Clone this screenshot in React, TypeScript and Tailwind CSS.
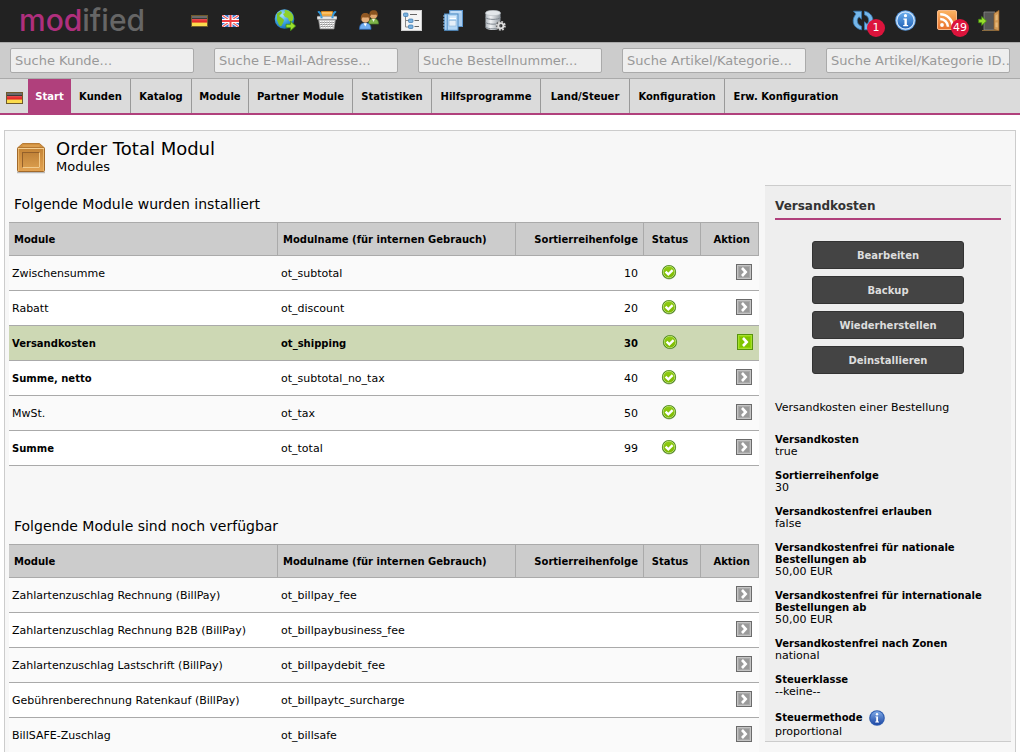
import React from "react";

const NAV = [
  { label: "Start", width: "min-w-[43px]" },
  { label: "Kunden", width: "min-w-[60px]" },
  { label: "Katalog", width: "min-w-[61px]" },
  { label: "Module", width: "min-w-[57px]" },
  { label: "Partner Module", width: "min-w-[104px]" },
  { label: "Statistiken", width: "min-w-[79px]" },
  { label: "Hilfsprogramme", width: "min-w-[109px]" },
  { label: "Land/Steuer", width: "min-w-[89px]" },
  { label: "Konfiguration", width: "min-w-[95px]" },
  { label: "Erw. Konfiguration", width: "min-w-[122px]" },
];

const SEARCHES = [
  "Suche Kunde...",
  "Suche E-Mail-Adresse...",
  "Suche Bestellnummer...",
  "Suche Artikel/Kategorie...",
  "Suche Artikel/Kategorie ID..",
];

type Row = {
  name: string;
  code: string;
  sort?: string;
  bold?: boolean;
  selected?: boolean;
};

const INSTALLED: Row[] = [
  { name: "Zwischensumme", code: "ot_subtotal", sort: "10" },
  { name: "Rabatt", code: "ot_discount", sort: "20" },
  { name: "Versandkosten", code: "ot_shipping", sort: "30", bold: true, selected: true },
  { name: "Summe, netto", code: "ot_subtotal_no_tax", sort: "40", bold: true },
  { name: "MwSt.", code: "ot_tax", sort: "50" },
  { name: "Summe", code: "ot_total", sort: "99", bold: true },
];

const AVAILABLE: Row[] = [
  { name: "Zahlartenzuschlag Rechnung (BillPay)", code: "ot_billpay_fee" },
  { name: "Zahlartenzuschlag Rechnung B2B (BillPay)", code: "ot_billpaybusiness_fee" },
  { name: "Zahlartenzuschlag Lastschrift (BillPay)", code: "ot_billpaydebit_fee" },
  { name: "Gebührenberechnung Ratenkauf (BillPay)", code: "ot_billpaytc_surcharge" },
  { name: "BillSAFE-Zuschlag", code: "ot_billsafe" },
];

const SETTINGS = [
  ["Versandkosten", "true"],
  ["Sortierreihenfolge", "30"],
  ["Versandkostenfrei erlauben", "false"],
  ["Versandkostenfrei für nationale Bestellungen ab", "50,00 EUR"],
  ["Versandkostenfrei für internationale Bestellungen ab", "50,00 EUR"],
  ["Versandkostenfrei nach Zonen", "national"],
  ["Steuerklasse", "--keine--"],
];

function GermanFlag() {
  return (
    <svg viewBox="0 0 17 12" className="h-3 w-[17px]" aria-hidden="true">
      <rect width="17" height="12" fill="#6e5a2c" />
      <rect x="1" y="1" width="15" height="3.4" fill="#3a3a3a" />
      <rect x="1" y="4" width="15" height="4" fill="#e22a2a" />
      <rect x="1" y="7.6" width="15" height="3.4" fill="#fbdc4c" />
      <rect x="1" y="1" width="15" height="2" fill="#fff" opacity=".25" />
      <rect x="1" y="4" width="15" height="1.4" fill="#fff" opacity=".15" />
    </svg>
  );
}

function BritishFlag() {
  return (
    <svg viewBox="0 0 17 12" className="h-3 w-[17px]" aria-hidden="true">
      <rect width="17" height="12" fill="#3f74cc" />
      <path d="M0 0 17 12M17 0 0 12" stroke="#fff" strokeWidth="2.8" />
      <path d="M0 0 17 12M17 0 0 12" stroke="#ee5a5a" strokeWidth="1.2" />
      <path d="M8.5 0V12M0 6H17" stroke="#fff" strokeWidth="4" />
      <path d="M8.5 0V12M0 6H17" stroke="#ee3f46" strokeWidth="2" />
    </svg>
  );
}

function GlobeIcon() {
  return (
    <svg viewBox="0 0 22 22" className="size-[22px]" aria-hidden="true">
      <defs>
        <radialGradient id="globe" cx=".38" cy=".3" r=".75">
          <stop offset="0" stopColor="#a8e0fb" />
          <stop offset=".55" stopColor="#3aa0e0" />
          <stop offset="1" stopColor="#1667b4" />
        </radialGradient>
      </defs>
      <circle cx="10.5" cy="10" r="9.8" fill="url(#globe)" />
      <path d="M11 1c3 0 6 2 7.500 4.500.8 1.500 1 3.500.5 5.500l-2 2-2-1-1-3-3-1-2-3 2-1-.500-2z" fill="#8ed02c" />
      <path d="M3 4.500 7 2l1 2-3 3 3 2 2 2-1 3-2 3.500-2-1.500L3 11z" fill="#7cc427" />
      <path d="M12 15.300h4.500V12.200L21.700 17 16.500 21.700v-3H12z" fill="#9be02a" stroke="#3f8c12" strokeWidth=".8" />
    </svg>
  );
}

function BasketIcon() {
  return (
    <svg viewBox="0 0 20 20" className="size-5" aria-hidden="true">
      <rect x="4" y="1.500" width="12" height="5" rx="1" fill="#f3a93c" stroke="#d68318" />
      <path d="M5 3h10" stroke="#ffd894" />
      <path d="M1 2.500C3 1 3 4 4.500 6M19 2.500C17 1 17 4 15.500 6" stroke="#2f9be2" strokeWidth="2" fill="none" />
      <rect x="0" y="6.200" width="20" height="3.200" rx="1" fill="#e8e8e8" stroke="#8e8e8e" strokeWidth=".6" />
      <path d="M1.500 9.500h17l-1.500 9.500H3z" fill="#c9c9c9" stroke="#909090" strokeWidth=".6" />
      <path d="M3 11.500h14M3 13.500h14M3.500 15.500h13M4 17.500h12" stroke="#fff" strokeWidth="1" strokeDasharray="1.500 1" />
      <path d="M3 12.500h14M3.500 14.500h13M4 16.500h12" stroke="#858585" strokeWidth=".8" strokeDasharray="1.500 1" />
      <path d="M3.500 7.200h2M14.500 7.200h2" stroke="#2f9be2" strokeWidth="2" />
    </svg>
  );
}

function UsersIcon() {
  return (
    <svg viewBox="0 0 20 20" className="size-5" aria-hidden="true">
      <path d="M9.500 14c0-4 2-5.500 5-5.500s5 1.500 5 5.500z" fill="#7eb34a" stroke="#4c7d22" strokeWidth=".7" />
      <path d="m13 9 1.500 3L16 9z" fill="#eaf5dc" />
      <circle cx="14.500" cy="5" r="3.700" fill="#e0a870" />
      <path d="M10.500 7C9.800 1.500 12 .3 14.700.3S19.500 2 18.600 7l-1.400-2.500c-1.700.5-3.300.4-4.700 0z" fill="#8a5420" />
      <path d="M.5 19.300c0-4.800 2-6.300 5.700-6.300S12 14.500 12 19.300z" fill="#72aef0" stroke="#2d67b2" strokeWidth=".8" />
      <path d="m4.500 13.200 1.800 3.400L8 13.200z" fill="#fff" />
      <circle cx="6.300" cy="8.600" r="4.100" fill="#e6b07c" />
      <path d="M1.900 10.500C1.200 4.500 3.500 3 6.400 3s5.200 1.800 4.400 7.500l-1.500-3.300c-2 .6-4 .4-5.700 0z" fill="#915823" />
    </svg>
  );
}

function TreeIcon() {
  return (
    <svg viewBox="0 0 21 21" className="size-[21px]" aria-hidden="true">
      <rect x=".5" y=".5" width="20" height="20" fill="#f4f4f4" stroke="#cfcfcf" />
      <path d="M4.500 5v12h5M4.500 10.500h5" stroke="#888" fill="none" />
      <rect x="2.500" y="3" width="4.500" height="3.500" rx="1" fill="#78b0de" stroke="#3a78b0" strokeWidth=".7" />
      <rect x="7.500" y="9" width="4.500" height="3.500" rx="1" fill="#78b0de" stroke="#3a78b0" strokeWidth=".7" />
      <rect x="7.500" y="15" width="4.500" height="3.500" rx="1" fill="#78b0de" stroke="#3a78b0" strokeWidth=".7" />
      <path d="M9 4.500h7M13.500 10.500H18M13.500 16.500H18" stroke="#666" />
    </svg>
  );
}

function BooksIcon() {
  return (
    <svg viewBox="0 0 20 21" className="h-[21px] w-5" aria-hidden="true">
      <rect x="6.500" y=".5" width="13" height="16" fill="#a9cdef" stroke="#5b93c9" />
      <path d="M8 2h10" stroke="#d9ebfb" />
      <rect x="1.500" y="4" width="13.500" height="16.300" fill="#b3d6f4" stroke="#4f8cc4" />
      <path d="M4.200 4.500v15.500" stroke="#4f8cc4" />
      <path d="M6.500 7h6.500M6.500 8.500h6.500" stroke="#fff" />
      <rect x="6" y="10.500" width="7" height="5.500" fill="#e5eff8" stroke="#8ab2d6" strokeWidth=".6" />
      <path d="M0 6h3M0 9h3M0 12h3M0 15h3M0 18h3" stroke="#9fc4e4" strokeWidth="1.200" />
    </svg>
  );
}

function DatabaseIcon() {
  return (
    <svg viewBox="0 0 21 21" className="size-[21px]" aria-hidden="true">
      <defs>
        <linearGradient id="drum">
          <stop offset="0" stopColor="#aab1b8" />
          <stop offset=".35" stopColor="#f1f3f5" />
          <stop offset="1" stopColor="#8e969d" />
        </linearGradient>
      </defs>
      <path d="M.5 3v14c0 2 3 3 7.500 3s7.500-1 7.500-3V3z" fill="url(#drum)" />
      <ellipse cx="8" cy="3" rx="7.500" ry="2.700" fill="#e3e7ea" stroke="#b1b8be" strokeWidth=".6" />
      <path d="M.5 7.500c2 2.500 13 2.500 15 0M.5 12.300c2 2.500 13 2.500 15 0M.5 17c2 2.500 13 2.500 15 0" stroke="#7d858d" fill="none" />
      <circle cx="15.800" cy="15.800" r="5" fill="#3a3a3a" opacity=".6" />
      <circle cx="15.800" cy="15.800" r="2.600" fill="none" stroke="#dedede" strokeWidth="1.800" />
      <circle cx="15.800" cy="15.800" r="4.100" fill="none" stroke="#d6d6d6" strokeWidth="1.700" strokeDasharray="1.700 1.520" />
    </svg>
  );
}

function RefreshIcon() {
  return (
    <svg viewBox="0 0 22 21" className="h-[21px] w-[22px]" aria-hidden="true">
      <g fill="#76b7ea" stroke="#3677b0" strokeWidth=".8">
        <path d="M1.500 1.200h8v8L7 6.800C5.500 8.500 5 10 5.500 12c.4 2 1.800 3.500 4 4.200v3.600C5 19 2 16 1.300 12.500.8 9.500 1.800 6.500 4 4z" />
        <path d="M20.500 19.800h-8v-8L15 14.200c1.500-1.700 2-3.200 1.500-5.200-.4-2-1.800-3.500-4-4.200V1.200C17 2 20 5 20.700 8.500c.5 3-.5 6-2.700 8.500z" />
      </g>
    </svg>
  );
}

function InfoIcon({ className, id }: { className: string; id: string }) {
  return (
    <svg viewBox="0 0 20 20" className={className} aria-hidden="true">
      <defs>
        <linearGradient id={id} x1="0" y1="0" x2="0" y2="1">
          <stop offset="0" stopColor={id === "infoTop" ? "#6db0f0" : "#7ea9e6"} />
          <stop offset="1" stopColor={id === "infoTop" ? "#1d5fb4" : "#1d47a4"} />
        </linearGradient>
      </defs>
      <circle cx="10" cy="10" r="9.800" fill={id === "infoTop" ? "#5b9be0" : "#2f5db0"} />
      <circle cx="10" cy="10" r="8.300" fill={`url(#${id})`} stroke={id === "infoTop" ? "#d5e8fb" : "none"} strokeWidth="1.200" />
      <circle cx="10" cy="5.400" r="1.500" fill="#fff" />
      <path d="M8 8h3.300v6.300h1.200v1.200H7.800v-1.200H9V9.200H8z" fill="#fff" />
    </svg>
  );
}

function FeedIcon() {
  return (
    <svg viewBox="0 0 20 20" className="size-5" aria-hidden="true">
      <defs>
        <linearGradient id="feed" x2="0" y2="1">
          <stop offset="0" stopColor="#fbb463" />
          <stop offset="1" stopColor="#e8702c" />
        </linearGradient>
      </defs>
      <rect x=".5" y=".5" width="19" height="19" rx="1.500" fill="url(#feed)" stroke="#f7b98a" />
      <circle cx="5" cy="15" r="1.900" fill="#fff" />
      <path d="M3.200 9a7.800 7.800 0 0 1 7.800 7.800M3.200 4.300A12.500 12.500 0 0 1 15.700 16.800" fill="none" stroke="#fff" strokeWidth="2.500" />
    </svg>
  );
}

function DoorIcon() {
  return (
    <svg viewBox="0 0 22 21" className="h-[21px] w-[22px]" aria-hidden="true">
      <path d="M6 2h11v18H6z" fill="#565656" stroke="#8b8b8b" strokeWidth=".8" />
      <path d="M4 20.500h17" stroke="#8a6b40" />
      <path d="m16 3.500 5-3.200v20.500l-5-1.300z" fill="#d29a56" stroke="#8e5c26" strokeWidth=".7" />
      <path d="M17.500 5.500 19.700 4v6l-2.200.5zM17.500 12.500h2.200v5l-2.200-.5z" fill="#e5b87a" />
      <path d="M.7 9.300h3V6.500L8.500 11l-4.800 4.500v-2.800h-3z" fill="#98dd2c" stroke="#438f10" strokeWidth=".8" />
    </svg>
  );
}

function CrateIcon() {
  return (
    <svg viewBox="0 0 30 32" className="h-8 w-[30px]" aria-hidden="true">
      <defs>
        <linearGradient id="crate" x2="0" y2="1">
          <stop offset="0" stopColor="#c48436" />
          <stop offset="1" stopColor="#e3a352" />
        </linearGradient>
        <linearGradient id="crateInner" x2="0" y2="1">
          <stop offset="0" stopColor="#c08238" />
          <stop offset="1" stopColor="#d99c4c" />
        </linearGradient>
      </defs>
      <path d="M1 30.500h28" stroke="#b9b9b9" strokeWidth="1.500" />
      <path d="M6.500 1.500h17l5 4.500H1.500z" fill="#d2913f" stroke="#b87c36" />
      <rect x="1.500" y="6" width="27" height="23.500" rx="1" fill="url(#crate)" stroke="#a2692a" />
      <path d="M2 6.500h26" stroke="#f5cf92" />
      <path d="M2.500 7v22M27.500 7v22" stroke="#e9b569" />
      <rect x="6.500" y="10.500" width="17" height="15" fill="url(#crateInner)" stroke="#94602a" />
      <path d="M6.500 25.500h17v-15" stroke="#f2cb8c" fill="none" />
      <path d="M6.500 4h17" stroke="#e3aa5e" />
    </svg>
  );
}

function StatusIcon() {
  return (
    <svg viewBox="0 0 16 16" className="inline-block size-4" aria-hidden="true">
      <defs>
        <linearGradient id="status" x2="0" y2="1">
          <stop offset="0" stopColor="#8fce14" />
          <stop offset="1" stopColor="#7cb800" />
        </linearGradient>
      </defs>
      <circle cx="8" cy="8.600" r="7.100" fill="#c3c9b9" />
      <circle cx="8" cy="8" r="7.100" fill="#4f8d1c" />
      <circle cx="8" cy="8" r="5.800" fill="url(#status)" stroke="#c5e57c" strokeWidth=".8" />
      <path d="m4.600 7.700 2.700 2.700 4.300-4.200" fill="none" stroke="#fff" strokeWidth="2.400" />
    </svg>
  );
}

function ActionIcon({ active }: { active?: boolean }) {
  return (
    <svg viewBox="0 0 16 16" className="size-4" aria-hidden="true">
      <rect x=".5" y=".5" width="15" height="15" fill={active ? "#8fd400" : "#a9a9a9"} stroke={active ? "#57930c" : "#6b6b6b"} />
      <rect x="1.500" y="1.500" width="13" height="13" fill="none" stroke={active ? "#a4de30" : "#c4c4c4"} />
      <rect x="3" y="3" width="10" height="10" fill={active ? "#7fc400" : "#9a9a9a"} />
      <path d="m6 4 3.700 4L6 12" fill="none" stroke="#fff" strokeWidth="2.600" />
    </svg>
  );
}

function IconLink({ label, children, badge }: { label: string; children: React.ReactNode; badge?: string }) {
  return (
    <a href="#" aria-label={label} className="relative flex w-[42px] items-center justify-center">
      {children}
      {badge && (
        <span className="absolute top-[9px] left-[25px] flex size-[18px] items-center justify-center rounded-full bg-[#dc143c] text-[11px] leading-none text-white">
          {badge}
        </span>
      )}
    </a>
  );
}

function ModuleTable({ rows, label }: { rows: Row[]; label: string }) {
  const head = "border-y border-r border-[#aaa] pt-0.5 pb-0 text-[10px] font-bold";
  return (
    <table aria-label={label} className="w-full table-fixed border-separate border-spacing-0 text-[11px] leading-3 text-black">
      <colgroup>
        <col />
        <col className="w-[238px]" />
        <col className="w-[128px]" />
        <col className="w-[57px]" />
        <col className="w-[58px]" />
      </colgroup>
      <thead>
        <tr className="h-[34px] bg-[#ccc]">
          <th className={`${head} px-[5px] text-left`}>Module</th>
          <th className={`${head} px-[5px] text-left`}>Modulname (für internen Gebrauch)</th>
          <th className={`${head} px-[5px] text-right`}>Sortierreihenfolge</th>
          <th className={`${head} pr-1 text-center`}>Status</th>
          <th className={`${head} pr-2 text-right`}>Aktion</th>
        </tr>
      </thead>
      <tbody>
        {rows.map((r) => {
          const cell = "border-b border-[#aaa]";
          const text = `${cell} pt-0.5`;
          return (
            <tr key={r.code} className={`h-[35px] ${r.selected ? "bg-[#cdd8b4] text-[10px] font-bold" : "odd:bg-[#fafafa] even:bg-white"}`}>
              <td className={`${text} px-[3px] ${r.bold ? "text-[10px] font-bold" : ""}`}>{r.name}</td>
              <td className={`${text} px-[3px]`}>{r.code}</td>
              <td className={`${text} pr-[6px] text-right`}>{r.sort}</td>
              <td className={`${cell} pb-0.5`}>
                {r.sort && (
                  <span className={`flex justify-center ${r.selected ? "pr-[6px]" : "pr-2"}`}>
                    <StatusIcon />
                  </span>
                )}
              </td>
              <td className={`${cell} pb-0.5`}>
                <a href="#" aria-label={`${r.name} auswählen`} className={`flex justify-end ${r.selected ? "pr-[6px]" : "pr-[7px]"}`}>
                  <ActionIcon active={r.selected} />
                </a>
              </td>
            </tr>
          );
        })}
      </tbody>
    </table>
  );
}

export default function App() {
  return (
    <div className="flex h-screen flex-col overflow-hidden bg-white font-['DejaVu_Sans',Verdana,sans-serif] text-[11px] leading-3 text-black">
      <header className="flex h-[42px] shrink-0 items-center bg-[#222] pr-[10px] pb-0.5 pl-[19px]">
        <a href="#" className="w-[159px] font-[Inter,sans-serif] text-[30px] leading-10 font-medium text-[#666]">
          <span className="text-[#af2f7d]">mod</span>ified
        </a>
        <div className="flex gap-[14px] pt-0.5 pr-[25px] pl-[13px]">
          <a href="#" aria-label="Deutsch"><GermanFlag /></a>
          <a href="#" aria-label="English"><BritishFlag /></a>
        </div>
        <nav aria-label="Schnellzugriff" className="flex">
          <IconLink label="Shop"><GlobeIcon /></IconLink>
          <IconLink label="Bestellungen"><BasketIcon /></IconLink>
          <IconLink label="Kunden"><UsersIcon /></IconLink>
          <IconLink label="Kategorien"><TreeIcon /></IconLink>
          <IconLink label="Content Manager"><BooksIcon /></IconLink>
          <IconLink label="Datenbank"><DatabaseIcon /></IconLink>
        </nav>
        <div className="ml-auto flex">
          <IconLink label="Aktualisierungen" badge="1"><RefreshIcon /></IconLink>
          <IconLink label="Information"><InfoIcon id="infoTop" className="size-[21px]" /></IconLink>
          <IconLink label="Nachrichten" badge="49"><FeedIcon /></IconLink>
          <IconLink label="Abmelden"><DoorIcon /></IconLink>
        </div>
      </header>

      <form className="grid h-[37px] shrink-0 grid-cols-5 items-center border-y border-[#aaa] bg-[#ccc]">
        {SEARCHES.map((s) => (
          <div key={s} className="px-[10px]">
            <input
              type="text"
              aria-label={s}
              placeholder={s}
              className="block h-[25px] w-full rounded-[2px] border border-[#aaa] bg-[#eee] pr-0 pl-1 text-[13px] placeholder:text-[#999] focus:outline-none"
            />
          </div>
        ))}
      </form>

      <nav aria-label="Hauptmenü" className="flex h-9 shrink-0 border-b-2 border-[#b0407c] bg-[#dbdbdb]">
        <a href="#" aria-label="Sprache" className="flex w-7 items-center justify-center pt-1">
          <GermanFlag />
        </a>
        {NAV.map((n, i) => (
          <a
            key={n.label}
            href="#"
            className={`flex items-center justify-center pt-0.5 text-[10px] font-bold ${n.width} ${i === 0 ? "bg-[#b0407c] text-white" : ""} ${
              i > 0 && i < NAV.length - 1 ? "border-r border-[#999]" : ""
            }`}
          >
            {n.label}
          </a>
        ))}
      </nav>

      <main className="mx-1 mt-[15px] flex-1 border border-b-0 border-[#ccc] bg-[#f7f7f7] px-1">
        <div className="flex items-start gap-[10px] pt-[11px] pl-[7px]">
          <CrateIcon />
          <div className="-mt-1">
            <h1 className="text-[18px] leading-[22px]">Order Total Modul</h1>
            <p className="text-[13px] leading-[14px]">Modules</p>
          </div>
        </div>
        <div className="mt-[11px] flex items-start gap-[6px]">
          <div className="min-w-0 flex-1">
            <h2 className="pt-[9px] pb-[8px] pl-[5px] text-[14px] leading-5">Folgende Module wurden installiert</h2>
            <ModuleTable rows={INSTALLED} label="Installierte Module" />
            <h2 className="pt-[50px] pb-[8px] pl-[5px] text-[14px] leading-5">Folgende Module sind noch verfügbar</h2>
            <ModuleTable rows={AVAILABLE} label="Verfügbare Module" />
          </div>
          <aside className="w-[246px] border-y border-[#ccc] bg-[#eee] px-[10px] pb-[3px]">
            <h3 className="mb-[21px] border-b-2 border-[#b0407c] pt-[13px] pb-[5px] text-[12px] leading-[14px] font-bold text-[#333]">Versandkosten</h3>
            <div className="flex flex-col items-center gap-[7px]">
              {["Bearbeiten", "Backup", "Wiederherstellen", "Deinstallieren"].map((b) => (
                <button key={b} type="button" className="h-7 w-[152px] rounded-[3px] border border-[#333] bg-[#444] pt-0.5 text-[10px] font-bold text-[#ddd]">
                  {b}
                </button>
              ))}
            </div>
            <p className="mt-7 mb-5">Versandkosten einer Bestellung</p>
            <dl>
              {SETTINGS.map(([k, v]) => (
                <div key={k} className="mb-3">
                  <dt className="text-[10px] font-bold">{k}</dt>
                  <dd>{v}</dd>
                </div>
              ))}
              <div>
                <dt className="flex items-center gap-[6px] text-[10px] font-bold">
                  Steuermethode
                  <InfoIcon id="infoSide" className="size-4" />
                </dt>
                <dd>proportional</dd>
              </div>
            </dl>
          </aside>
        </div>
      </main>
    </div>
  );
}
